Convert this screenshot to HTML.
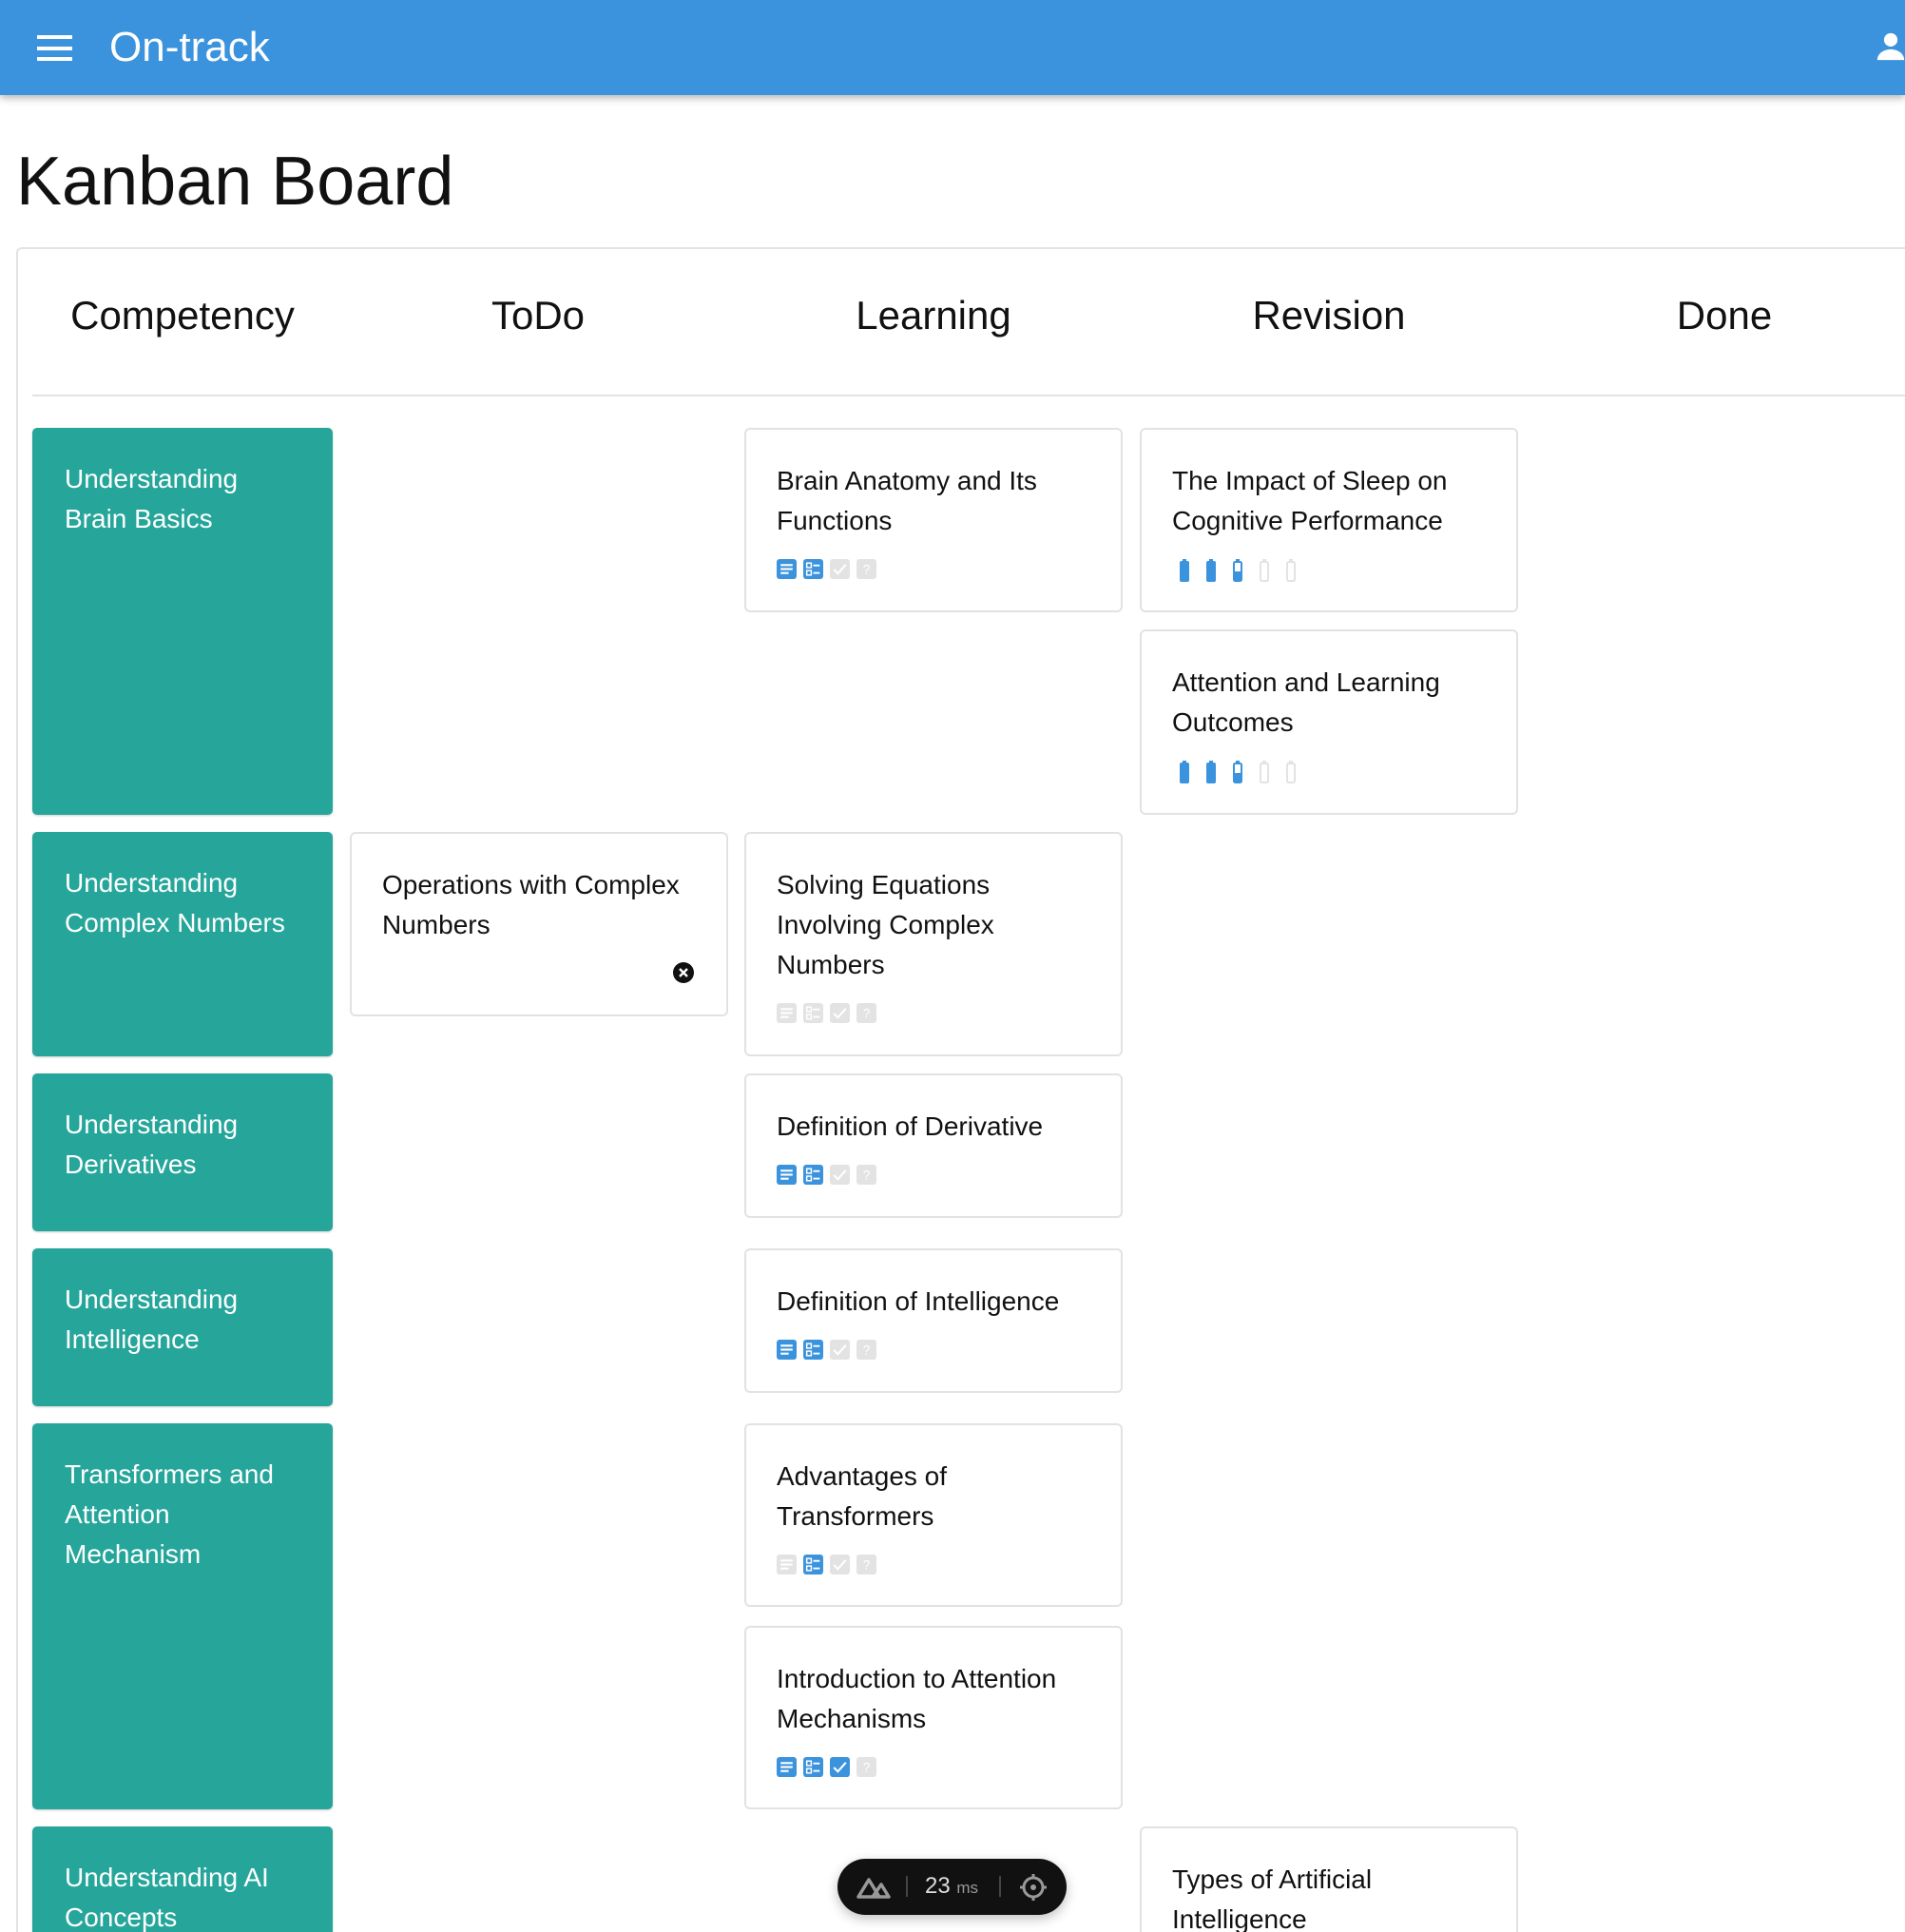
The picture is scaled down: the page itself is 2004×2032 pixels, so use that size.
<!DOCTYPE html>
<html><head><meta charset="utf-8">
<style>
*{box-sizing:border-box;margin:0;padding:0}
html,body{width:2004px;height:2032px;overflow:hidden;background:#fff;font-family:"Liberation Sans",Arial,sans-serif}
#w{position:relative;width:2004px;height:2032px;overflow:hidden}
.bar{position:absolute;left:0;top:0;width:2004px;height:100px;background:#3b93dd;box-shadow:0 3px 8px rgba(0,0,0,.3);z-index:5}
.bar .t{position:absolute;left:115px;top:24px;font-size:44px;color:#fff;line-height:52px}
.ham{position:absolute;left:39px;width:37px;height:4px;background:#fff}
h1{position:absolute;left:17px;top:146px;font-size:72px;font-weight:normal;color:#111;line-height:90px}
.board{position:absolute;left:17px;top:260px;width:1987px;height:1772px;border:2px solid #e3e3e3;border-right:none;border-bottom:none;border-radius:6px 0 0 0}
.hline{position:absolute;left:34px;top:415px;width:1970px;height:2px;background:#e3e3e3}
.ch{position:absolute;top:304px;font-size:42px;color:#111;line-height:56px;transform:translateX(-50%);white-space:nowrap}
.c{position:absolute;border:2px solid #e2e2e2;border-radius:6px;background:#fff;padding:33px 32px;font-size:28px;line-height:42px;color:#111}
.k{position:absolute;background:#26a69a;border-radius:5px;padding:33px 34px;font-size:28px;line-height:42px;color:#fff;left:34px;width:316px;box-shadow:0 1px 2px rgba(0,0,0,.2)}
.ic{display:flex;gap:7px;margin-top:19px;height:22px}
.ic svg{width:21px;height:21px;display:block}
.bt{gap:18px;height:23px;margin-left:8px}
</style></head><body><div id="w">
<div class="bar">
<div class="ham" style="top:37px"></div><div class="ham" style="top:49px"></div><div class="ham" style="top:60px"></div>
<div class="t">On-track</div>
<svg style="position:absolute;left:1972px;top:32px" width="34" height="34" viewBox="0 0 24 24"><circle cx="12" cy="7" r="5" fill="#fff"/><path d="M2 22c0-5 5-8 10-8s10 3 10 8z" fill="#fff"/></svg>
</div>
<h1>Kanban Board</h1>
<div class="board"></div>
<div class="hline"></div>
<div class="ch" style="left:192px">Competency</div>
<div class="ch" style="left:566px">ToDo</div>
<div class="ch" style="left:982px">Learning</div>
<div class="ch" style="left:1398px">Revision</div>
<div class="ch" style="left:1814px">Done</div>

<svg width="0" height="0" style="position:absolute">
<defs>
<symbol id="doc" viewBox="0 0 20 20"><rect x="0" y="0" width="20" height="20" rx="3" fill="currentColor"/><rect x="4" y="5" width="12" height="2" fill="#fff"/><rect x="4" y="9" width="12" height="2" fill="#fff"/><rect x="4" y="13" width="8" height="2" fill="#fff"/></symbol>
<symbol id="lst" viewBox="0 0 20 20"><rect x="0" y="0" width="20" height="20" rx="3" fill="currentColor"/><rect x="3.5" y="4" width="4.5" height="4.5" fill="none" stroke="#fff" stroke-width="1.4"/><rect x="3.5" y="11.5" width="4.5" height="4.5" fill="none" stroke="#fff" stroke-width="1.4"/><rect x="10" y="5.5" width="6.5" height="1.8" fill="#fff"/><rect x="10" y="13" width="6.5" height="1.8" fill="#fff"/></symbol>
<symbol id="chk" viewBox="0 0 20 20"><rect x="0" y="0" width="20" height="20" rx="3" fill="currentColor"/><path d="M4 10.5l4 4 8-9" fill="none" stroke="#fff" stroke-width="2"/></symbol>
<symbol id="q" viewBox="0 0 20 20"><rect x="0" y="0" width="20" height="20" rx="3" fill="currentColor"/><text x="10" y="15" font-size="13" text-anchor="middle" fill="#fff" font-family="Liberation Sans">?</text></symbol>
<symbol id="bf" viewBox="0 0 10 24"><rect x="3" y="0" width="4" height="3" fill="#3b93dd"/><rect x="0" y="2" width="10" height="22" rx="2" fill="#3b93dd"/></symbol>
<symbol id="bh" viewBox="0 0 10 24"><rect x="3" y="0" width="4" height="3" fill="#3b93dd"/><rect x="1" y="3" width="8" height="20" rx="1.5" fill="none" stroke="#3b93dd" stroke-width="2"/><rect x="2" y="13" width="6" height="10" fill="#3b93dd"/></symbol>
<symbol id="be" viewBox="0 0 10 24"><rect x="3" y="0" width="4" height="3" fill="#e3e3e3"/><rect x="1" y="3" width="8" height="20" rx="1.5" fill="none" stroke="#e3e3e3" stroke-width="2"/></symbol>
</defs></svg>

<div class="k" style="top:450px;height:407px">Understanding<br>Brain Basics</div>
<div class="k" style="top:875px;height:236px">Understanding<br>Complex Numbers</div>
<div class="k" style="top:1129px;height:166px">Understanding<br>Derivatives</div>
<div class="k" style="top:1313px;height:166px">Understanding<br>Intelligence</div>
<div class="k" style="top:1497px;height:406px">Transformers and<br>Attention<br>Mechanism</div>
<div class="k" style="top:1921px;height:111px;border-radius:5px 5px 0 0;overflow:hidden">Understanding AI<br>Concepts</div>

<div class="c" style="left:368px;top:875px;width:398px;height:194px">Operations with Complex<br>Numbers
<svg style="position:absolute;left:337px;top:134px" width="24" height="24" viewBox="0 0 24 24"><circle cx="12" cy="12" r="11" fill="#111"/><path d="M8 8l8 8M16 8l-8 8" stroke="#fff" stroke-width="2.4"/></svg></div>

<div class="c" style="left:783px;top:450px;width:398px;height:194px">Brain Anatomy and Its<br>Functions
<div class="ic"><svg style="color:#3b93dd"><use href="#doc"/></svg><svg style="color:#3b93dd"><use href="#lst"/></svg><svg style="color:#e3e3e3"><use href="#chk"/></svg><svg style="color:#e3e3e3"><use href="#q"/></svg></div></div>
<div class="c" style="left:783px;top:875px;width:398px;height:236px">Solving Equations<br>Involving Complex<br>Numbers
<div class="ic"><svg style="color:#e3e3e3"><use href="#doc"/></svg><svg style="color:#e3e3e3"><use href="#lst"/></svg><svg style="color:#e3e3e3"><use href="#chk"/></svg><svg style="color:#e3e3e3"><use href="#q"/></svg></div></div>
<div class="c" style="left:783px;top:1129px;width:398px;height:152px">Definition of Derivative
<div class="ic"><svg style="color:#3b93dd"><use href="#doc"/></svg><svg style="color:#3b93dd"><use href="#lst"/></svg><svg style="color:#e3e3e3"><use href="#chk"/></svg><svg style="color:#e3e3e3"><use href="#q"/></svg></div></div>
<div class="c" style="left:783px;top:1313px;width:398px;height:152px">Definition of Intelligence
<div class="ic"><svg style="color:#3b93dd"><use href="#doc"/></svg><svg style="color:#3b93dd"><use href="#lst"/></svg><svg style="color:#e3e3e3"><use href="#chk"/></svg><svg style="color:#e3e3e3"><use href="#q"/></svg></div></div>
<div class="c" style="left:783px;top:1497px;width:398px;height:193px">Advantages of<br>Transformers
<div class="ic"><svg style="color:#e3e3e3"><use href="#doc"/></svg><svg style="color:#3b93dd"><use href="#lst"/></svg><svg style="color:#e3e3e3"><use href="#chk"/></svg><svg style="color:#e3e3e3"><use href="#q"/></svg></div></div>
<div class="c" style="left:783px;top:1710px;width:398px;height:193px">Introduction to Attention<br>Mechanisms
<div class="ic"><svg style="color:#3b93dd"><use href="#doc"/></svg><svg style="color:#3b93dd"><use href="#lst"/></svg><svg style="color:#3b93dd"><use href="#chk"/></svg><svg style="color:#e3e3e3"><use href="#q"/></svg></div></div>

<div class="c" style="left:1199px;top:450px;width:398px;height:194px">The Impact of Sleep on<br>Cognitive Performance
<div class="ic bt">
<svg style="width:10px;height:24px"><use href="#bf"/></svg><svg style="width:10px;height:24px"><use href="#bf"/></svg><svg style="width:10px;height:24px"><use href="#bh"/></svg><svg style="width:10px;height:24px"><use href="#be"/></svg><svg style="width:10px;height:24px"><use href="#be"/></svg>
</div></div>
<div class="c" style="left:1199px;top:662px;width:398px;height:195px">Attention and Learning<br>Outcomes
<div class="ic bt">
<svg style="width:10px;height:24px"><use href="#bf"/></svg><svg style="width:10px;height:24px"><use href="#bf"/></svg><svg style="width:10px;height:24px"><use href="#bh"/></svg><svg style="width:10px;height:24px"><use href="#be"/></svg><svg style="width:10px;height:24px"><use href="#be"/></svg>
</div></div>
<div class="c" style="left:1199px;top:1921px;width:398px;height:111px;border-bottom:none;border-radius:6px 6px 0 0;overflow:hidden">Types of Artificial<br>Intelligence</div>

<div style="position:absolute;left:881px;top:1955px;width:241px;height:59px;background:#111;border-radius:30px;box-shadow:0 4px 12px rgba(0,0,0,.25);color:#ccc;z-index:6">
<svg style="position:absolute;left:19px;top:17px" width="38" height="26" viewBox="0 0 38 26"><path d="M3 23L14 5l11 18z M18 23l9-13 8 13z" fill="none" stroke="#999" stroke-width="3.5" stroke-linejoin="round"/></svg>
<div style="position:absolute;left:72px;top:18px;width:2px;height:22px;background:#444"></div>
<div style="position:absolute;left:92px;top:15px;font-size:24px;line-height:28px;color:#ddd">23 <span style="font-size:17px;color:#999">ms</span></div>
<div style="position:absolute;left:170px;top:18px;width:2px;height:22px;background:#444"></div>
<svg style="position:absolute;left:190px;top:14px" width="32" height="32" viewBox="0 0 32 32"><circle cx="16" cy="16" r="10" fill="none" stroke="#999" stroke-width="3"/><circle cx="16" cy="16" r="3" fill="#999"/><path d="M16 2v5M16 25v5M2 16h5M25 16h5" stroke="#999" stroke-width="3"/></svg>
</div>
</div></body></html>
